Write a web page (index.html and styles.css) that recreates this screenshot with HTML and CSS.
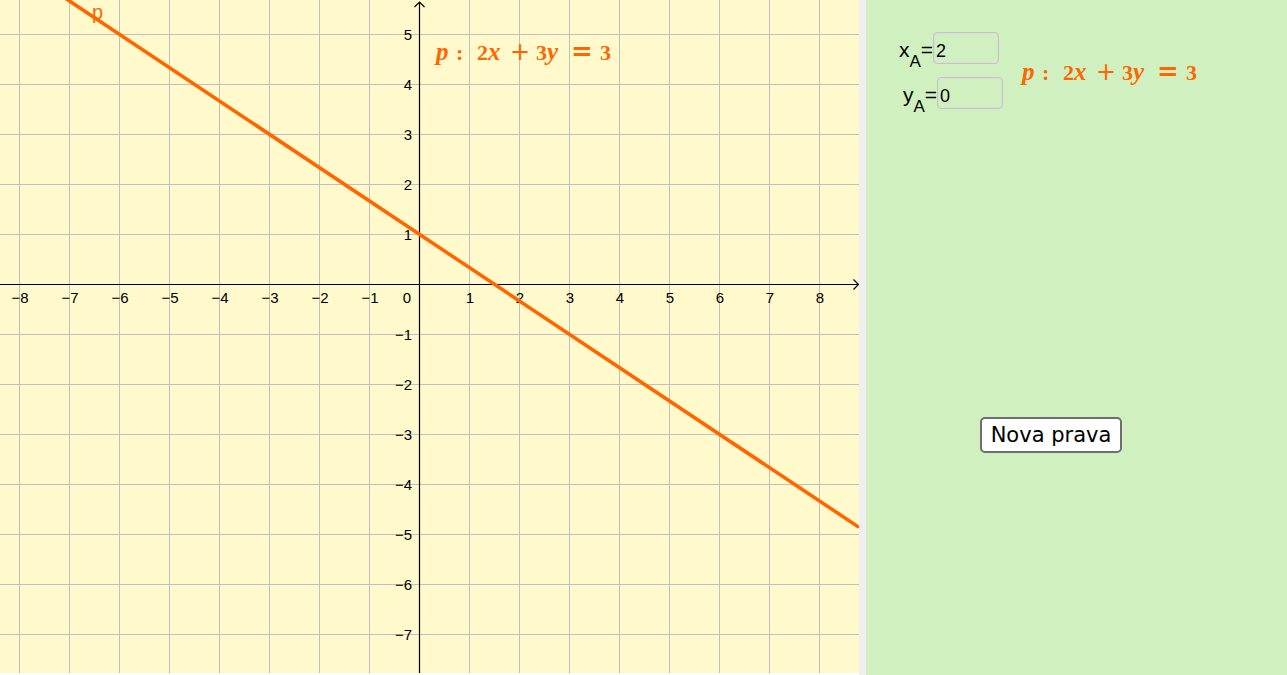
FILE: index.html
```html
<!DOCTYPE html>
<html>
<head>
<meta charset="utf-8">
<link rel="stylesheet" href="styles.css">
</head>
<body>
<div class="app">
  <div class="graph">
    <svg class="plot" width="859" height="675" viewBox="0 0 859 675">
      <path class="grid" d="M19.5 0V675M69.5 0V675M119.5 0V675M169.5 0V675M219.5 0V675M269.5 0V675M319.5 0V675M369.5 0V675M469.5 0V675M519.5 0V675M569.5 0V675M619.5 0V675M669.5 0V675M719.5 0V675M769.5 0V675M819.5 0V675M0 34.5H859M0 84.5H859M0 134.5H859M0 184.5H859M0 234.5H859M0 334.5H859M0 384.5H859M0 434.5H859M0 484.5H859M0 534.5H859M0 584.5H859M0 634.5H859"/>
      <path class="axis" d="M0 284.5H858.5M419.5 2V675M414.5 7L419.5 2L424.5 7M853.5 279.5L858.5 284.5L853.5 289.5"/>
      <g class="tick xt">
        <text x="20" y="303">−8</text>
        <text x="70" y="303">−7</text>
        <text x="120" y="303">−6</text>
        <text x="170" y="303">−5</text>
        <text x="220" y="303">−4</text>
        <text x="270" y="303">−3</text>
        <text x="320" y="303">−2</text>
        <text x="370" y="303">−1</text>
        <text x="470" y="303">1</text>
        <text x="520" y="303">2</text>
        <text x="570" y="303">3</text>
        <text x="620" y="303">4</text>
        <text x="670" y="303">5</text>
        <text x="720" y="303">6</text>
        <text x="770" y="303">7</text>
        <text x="820" y="303">8</text>
      </g>
      <g class="tick yt">
        <text x="411" y="303">0</text>
        <text x="412" y="39.5">5</text>
        <text x="412" y="89.5">4</text>
        <text x="412" y="139.5">3</text>
        <text x="412" y="189.5">2</text>
        <text x="412" y="239.5">1</text>
        <text x="412" y="339.5">−1</text>
        <text x="412" y="389.5">−2</text>
        <text x="412" y="439.5">−3</text>
        <text x="412" y="489.5">−4</text>
        <text x="412" y="539.5">−5</text>
        <text x="412" y="589.5">−6</text>
        <text x="412" y="639.5">−7</text>
      </g>
      <path class="line" d="M0 -45.3L859 527.3"/>
      <text class="linelabel" x="92" y="19">p</text>
    </svg>
    <div class="eq eq-graph">
      <span class="v w20">p</span><span class="c w21">:</span><span class="d w11">2</span><span class="v w24">x</span><span class="o w24">+</span><span class="d w11">3</span><span class="v w24">y</span><span class="o eqs w26">=</span><span class="d w12">3</span>
    </div>
  </div>
  <div class="divider"></div>
  <div class="side">
    <div class="top">
      <div class="fields">
        <div class="field">
          <span class="lbl">x<sub>A</sub>=</span><span class="box">2</span>
        </div>
        <div class="field field-y">
          <span class="lbl">y<sub>A</sub>=</span><span class="box">0</span>
        </div>
      </div>
      <div class="eq eq-side">
        <span class="v w20">p</span><span class="c w21">:</span><span class="d w11">2</span><span class="v w24">x</span><span class="o w24">+</span><span class="d w11">3</span><span class="v w24">y</span><span class="o eqs w26">=</span><span class="d w12">3</span>
      </div>
    </div>
    <button class="btn">Nova prava</button>
  </div>
</div>
</body>
</html>
```
FILE: styles.css
```css
html, body {
  margin: 0;
  padding: 0;
  height: 100%;
  overflow: hidden;
}
body {
  font-family: "Liberation Sans", Arial, sans-serif;
  background: #ffffff;
}
.app {
  display: flex;
  height: 100%;
}
.graph {
  position: relative;
  width: 859px;
  height: 673px;
  flex: none;
  background: #fff9cc;
  overflow: hidden;
}
.plot {
  display: block;
}
.grid {
  stroke: #c0c0c0;
  stroke-width: 1;
  fill: none;
}
.axis {
  stroke: #000;
  stroke-width: 1.2;
  fill: none;
}
.tick {
  font-family: "Liberation Sans", Arial, sans-serif;
  font-size: 15px;
  fill: #000;
}
.xt text {
  text-anchor: middle;
}
.yt text {
  text-anchor: end;
}
.line {
  stroke: #ff6600;
  stroke-width: 3.6;
  fill: none;
}
.linelabel {
  font-family: "Liberation Sans", Arial, sans-serif;
  font-size: 20px;
  fill: #ff6600;
}
.divider {
  width: 7px;
  flex: none;
  background: #efefef;
}
.side {
  flex: 1;
  background: #d0f0c0;
  padding: 32px 0 0 33px;
}
.top {
  display: flex;
  align-items: flex-start;
}
.fields {
  display: flex;
  flex-direction: column;
  gap: 13px;
}
.field {
  display: flex;
  align-items: baseline;
}
.field-y {
  margin-left: 4px;
}
.lbl {
  font-size: 21px;
  line-height: 1;
  color: #000;
}
.lbl sub {
  font-size: 17px;
  line-height: 0;
  vertical-align: -10px;
}
.box {
  display: block;
  box-sizing: border-box;
  width: 66px;
  height: 32px;
  padding: 6px 0 0 2px;
  line-height: 24px;
  font-size: 18px;
  color: #000;
  border: 1px solid #c4c4c4;
  border-radius: 4px;
  box-shadow: inset 0 0 0 1px #dcdcdc;
}
.eq {
  display: flex;
  align-items: baseline;
  font-family: "Liberation Serif", "Times New Roman", serif;
  font-weight: bold;
  font-size: 22px;
  line-height: 24px;
  color: #ff6600;
  white-space: nowrap;
}
.eq span {
  display: inline-block;
  flex: none;
}
.eq .v {
  font-style: italic;
  font-size: 25px;
}
.eq .o {
  font-family: "DejaVu Sans", sans-serif;
  font-weight: normal;
  font-size: 24px;
  margin-left: -2px;
  margin-right: 2px;
}
.eq .eqs {
  font-size: 26px;
  font-weight: bold;
  margin-left: 0;
  margin-right: 3px;
}
.w11 { width: 11px; }
.w12 { width: 12px; }
.w20 { width: 20px; }
.w21 { width: 21px; }
.w24 { width: 24px; }
.w26 { width: 26px; }
.eq-graph {
  position: absolute;
  left: 436px;
  top: 39px;
}
.eq-side {
  margin: 27px 0 0 19px;
}
.btn {
  display: block;
  margin: 308px 0 0 81px;
  box-sizing: border-box;
  width: 142px;
  height: 36px;
  padding: 0;
  background: #ffffff;
  border: 2px solid #6e6e6e;
  border-radius: 5px;
  font-family: "DejaVu Sans", sans-serif;
  font-size: 21px;
  color: #000;
  text-align: center;
}
```
